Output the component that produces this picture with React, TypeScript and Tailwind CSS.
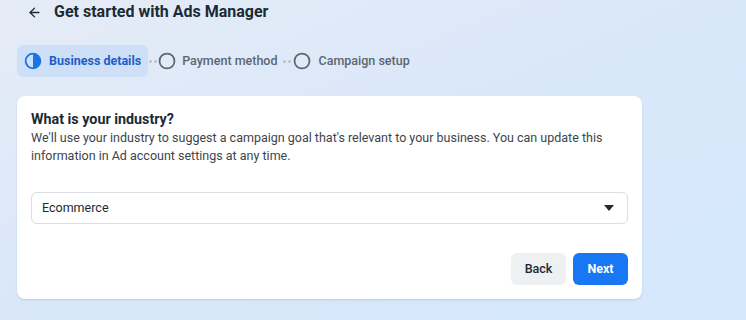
import { ArrowLeft } from 'lucide-react'

function HalfCircle() {
  return (
    <svg width="18" height="18" viewBox="0 0 20 20">
      <circle cx="10" cy="10" r="8.2" fill="none" stroke="#1b74e4" strokeWidth="2" />
      <path d="M10 1.8 A8.2 8.2 0 0 1 10 18.2 Z" fill="#1b74e4" />
    </svg>
  )
}

function EmptyCircle() {
  return (
    <svg width="18" height="18" viewBox="0 0 20 20">
      <circle cx="10" cy="10" r="8.3" fill="none" stroke="#5f6870" strokeWidth="2" />
    </svg>
  )
}

function Dots() {
  return (
    <div className="flex items-center gap-[2px] px-[1px]">
      <span className="h-[3px] w-[3px] rounded-full bg-[#b9c3d0]" />
      <span className="h-[3px] w-[3px] rounded-full bg-[#b9c3d0]" />
    </div>
  )
}

export default function App() {
  return (
    <div
      className="h-[320px] w-[746px] overflow-hidden bg-gradient-to-br from-[#e6ecf6] via-[#d9e7fa] to-[#d4e8fc] text-[#1c2b33]"
      style={{ fontFamily: 'Roboto, "Liberation Sans", sans-serif' }}
    >
      <div className="flex h-[24px] items-center gap-[12px] pl-[27px]">
        <ArrowLeft size={15} strokeWidth={2.2} className="text-[#1c2b33]" />
        <h1 className="text-[16px] font-bold leading-[22px] text-[#1c2b33]">Get started with Ads Manager</h1>
      </div>

      <div className="ml-[17px] mt-[21px] flex items-center">
        <div className="flex h-[32px] items-center gap-[7px] rounded-[6px] bg-[#cde0f8] pl-[7px] pr-[7px]">
          <HalfCircle />
          <span className="text-[12.5px] font-bold text-[#1f5dc8]">Business details</span>
        </div>
        <Dots />
        <div className="flex items-center gap-[6px]">
          <EmptyCircle />
          <span className="text-[12.5px] font-medium text-[#5b6670]">Payment method</span>
        </div>
        <div className="ml-[4px]">
          <Dots />
        </div>
        <div className="flex items-center gap-[8px] pl-[1px]">
          <EmptyCircle />
          <span className="text-[12.5px] font-medium text-[#5b6670]">Campaign setup</span>
        </div>
      </div>

      <div className="ml-[17px] mt-[19px] w-[625px] rounded-[8px] bg-white px-[14px] pb-[14px] pt-[14px] shadow-[0_1px_2px_rgba(0,0,0,0.12)]">
        <h2 className="text-[14.3px] font-bold leading-[18px] text-[#1c2b33]">What is your industry?</h2>
        <p className="mt-[1px] text-[12.5px] leading-[18px] text-[#3d454c]">
          We'll use your industry to suggest a campaign goal that's relevant to your business. You can update this
          <br />
          information in Ad account settings at any time.
        </p>
        <div className="mt-[27px] flex h-[32px] items-center justify-between rounded-[6px] border border-[#dadde1] pl-[10px] pr-[13px]">
          <span className="text-[12.5px] text-[#1c2b33]">Ecommerce</span>
          <svg width="10" height="6" viewBox="0 0 10 6">
            <path d="M0 0 H10 L5 6 Z" fill="#1c2b33" />
          </svg>
        </div>
        <div className="mt-[29px] flex justify-end gap-[7px]">
          <button className="h-[32px] w-[55px] rounded-[6px] bg-[#eef0f2] text-[12.5px] font-medium text-[#1c2b33]">Back</button>
          <button className="h-[32px] w-[55px] rounded-[6px] bg-[#1877f2] text-[12.5px] font-bold text-white">Next</button>
        </div>
      </div>
    </div>
  )
}
